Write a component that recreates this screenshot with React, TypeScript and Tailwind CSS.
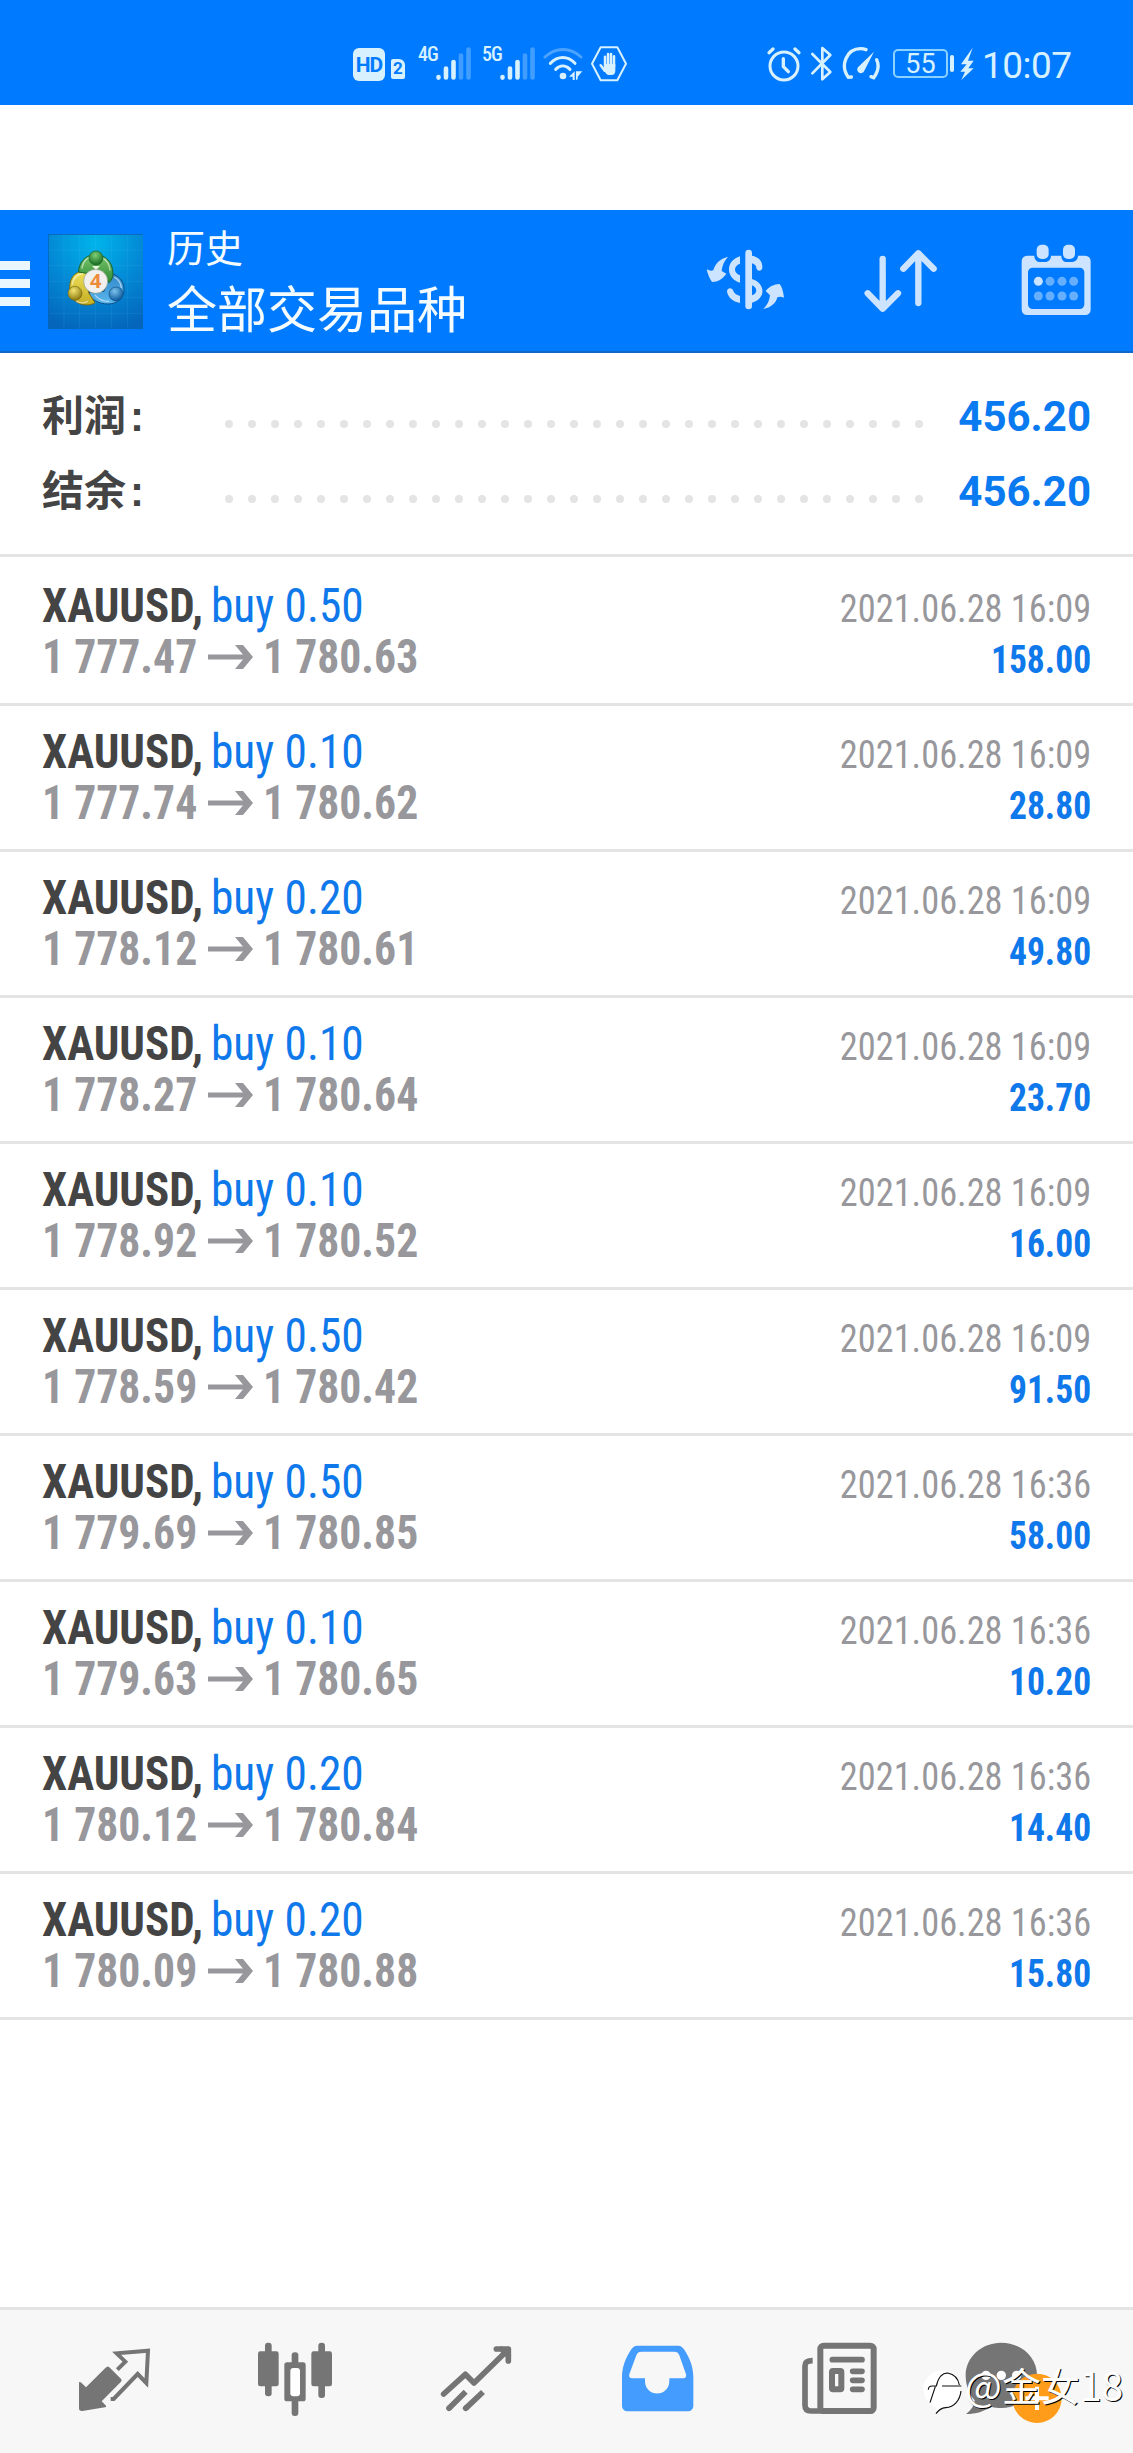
const deals = [
  { volume: '0.50', open: '1 777.47', close: '1 780.63', time: '2021.06.28 16:09', profit: '158.00' },
  { volume: '0.10', open: '1 777.74', close: '1 780.62', time: '2021.06.28 16:09', profit: '28.80' },
  { volume: '0.20', open: '1 778.12', close: '1 780.61', time: '2021.06.28 16:09', profit: '49.80' },
  { volume: '0.10', open: '1 778.27', close: '1 780.64', time: '2021.06.28 16:09', profit: '23.70' },
  { volume: '0.10', open: '1 778.92', close: '1 780.52', time: '2021.06.28 16:09', profit: '16.00' },
  { volume: '0.50', open: '1 778.59', close: '1 780.42', time: '2021.06.28 16:09', profit: '91.50' },
  { volume: '0.50', open: '1 779.69', close: '1 780.85', time: '2021.06.28 16:36', profit: '58.00' },
  { volume: '0.10', open: '1 779.63', close: '1 780.65', time: '2021.06.28 16:36', profit: '10.20' },
  { volume: '0.20', open: '1 780.12', close: '1 780.84', time: '2021.06.28 16:36', profit: '14.40' },
  { volume: '0.20', open: '1 780.09', close: '1 780.88', time: '2021.06.28 16:36', profit: '15.80' },
];

const summary = [
  { label: '利润', value: '456.20' },
  { label: '结余', value: '456.20' },
];

const Signal = ({ label }: { label: string }) => (
  <div className="flex h-9 w-[54px]">
    <span className="w-[18px] whitespace-nowrap text-[20px] leading-[17px] font-medium tracking-[-1px] font-['Roboto_Condensed']">
      {label}
    </span>
    <svg className="h-9 w-9" viewBox="0 0 36 36" stroke="currentColor" strokeWidth="4.6" strokeLinecap="round">
      <path d="M2.5 31v.6M10 22.500v9M17.500 16v15.500" />
      <path d="M25 9.500v22M32.500 3.500v28" opacity=".3" />
    </svg>
  </div>
);

const StatusBar = () => (
  <div className="flex h-[105px] items-start bg-[#007aff] pt-[46px] pl-[353px] text-[#d8f1ff]">
    <div className="mt-[2px] flex h-[33px] w-8 items-center justify-center rounded-[6px] bg-[#d8f1ff] pt-[2px] text-[21px] font-bold tracking-[-1px] text-[#007aff]">
      HD
    </div>
    <div className="mt-[13px] ml-[6px] flex h-5 w-[14px] items-center justify-center rounded-[2px] rounded-tr-[6px] bg-[#d8f1ff] text-[17px] font-bold text-[#007aff]">
      2
    </div>
    <div className="ml-[13px] flex gap-[10px]">
      <Signal label="4G" />
      <Signal label="5G" />
    </div>
    {/* wifi */}
    <svg className="ml-[7px] h-9 w-10" viewBox="0 0 120 108" fill="none" stroke="currentColor" strokeWidth="9" strokeLinecap="round">
      <path d="M6 33c32-30 76-30 108 0" opacity=".35" />
      <path d="M22 52c23-23 52-23 74 0M38 70c13-13 30-13 43 0" />
      <circle cx="60" cy="90" r="10" fill="currentColor" stroke="none" />
      <path d="M95 76v26h-6v-10H78zM99 76v26l5-2v-8l14-16z" fill="currentColor" stroke="none" />
    </svg>
    {/* blocked calls */}
    <svg className="ml-[7px] h-9 w-[38px]" viewBox="0 0 114 108" fill="none" stroke="currentColor" strokeWidth="6" strokeLinejoin="round">
      <path d="M32 4h50l26 49-26 50H32L6 53z" />
      <g strokeLinecap="round" strokeWidth="7.500">
        <path d="M45 64V32M54 60V24M63 60V24M72 62V31" />
        <path d="M44 74L32 58" />
      </g>
      <path d="M42 54h34v20c0 8-5 13-10 13H56c-5 0-8-4-13-13z" fill="currentColor" stroke="none" />
    </svg>

    {/* alarm */}
    <svg className="ml-[137px] h-9 w-[37px]" viewBox="0 0 111 108" fill="none" stroke="currentColor" strokeWidth="9" strokeLinecap="round">
      <circle cx="57" cy="60" r="42" />
      <path d="M55 38v24l15 15" strokeWidth="10" />
      <path d="M12 20L24 9M90 9l12 11" strokeWidth="10" />
    </svg>
    {/* bluetooth */}
    <svg className="ml-[7px] h-9 w-6" viewBox="0 0 72 108" fill="none" stroke="currentColor" strokeWidth="8" strokeLinecap="round" strokeLinejoin="round">
      <path d="M10 24l54 54-24 22V6l24 21L10 82" />
    </svg>
    {/* gauge */}
    <svg className="ml-[7px] h-9 w-[42px]" viewBox="0 0 126 108" fill="none" stroke="currentColor" strokeWidth="10" strokeLinecap="round">
      <path d="M34 93l-9 1C-1 58 20 8 62 8c6 0 11 1 16 3M110 41c8 18 4 37-9 54l-8-3" />
      <path d="M102 17L73 74a11 11 0 1 1-16-13z" fill="currentColor" stroke="none" />
    </svg>
    <div className="mt-[3px] ml-[11px] flex h-[29px] w-[55px] items-center justify-center rounded-[5px] border-2 border-[#8ad2ff] pt-px text-[27px] leading-none">
      55
    </div>
    <div className="mt-[9px] ml-[2px] h-[17px] w-1 rounded-full bg-[#d8f1ff]" />
    <svg className="ml-[6px] h-9 w-[14px]" viewBox="0 0 42 108" fill="currentColor">
      <path d="M38 5L3 55h17L1 77h14L4 102l37-35H25l16-23H24z" />
    </svg>
    <span className="ml-[8px] text-[37px] leading-[39px] tracking-[-0.5px]">10:07</span>
  </div>
);

const Logo = () => (
  <svg className="mt-6 ml-[18px] h-[95px] w-[95px]" viewBox="144 102 285 285">
    <defs>
      <radialGradient id="sky" cx=".5" cy=".1" r=".95">
        <stop offset="0" stopColor="#00b4ea" />
        <stop offset=".5" stopColor="#038ad6" />
        <stop offset="1" stopColor="#0465bb" />
      </radialGradient>
      <linearGradient id="green" x2="0" y2="1">
        <stop offset="0" stopColor="#7cc56b" />
        <stop offset="1" stopColor="#2b8b35" />
      </linearGradient>
      <linearGradient id="yellow" x2="0" y2="1">
        <stop offset="0" stopColor="#efe05a" />
        <stop offset="1" stopColor="#c4ae25" />
      </linearGradient>
      <linearGradient id="blue" x2="0" y2="1">
        <stop offset="0" stopColor="#2f86c8" />
        <stop offset="1" stopColor="#5cb8ee" />
      </linearGradient>
      <radialGradient id="greenBall" cx=".45" cy=".3" r=".7">
        <stop offset="0" stopColor="#7fcf74" />
        <stop offset="1" stopColor="#146b22" />
      </radialGradient>
      <radialGradient id="yellowBall" cx=".4" cy=".3" r=".7">
        <stop offset="0" stopColor="#f3e572" />
        <stop offset="1" stopColor="#8d7a10" />
      </radialGradient>
      <radialGradient id="blueBall" cx=".4" cy=".3" r=".7">
        <stop offset="0" stopColor="#7cc2ec" />
        <stop offset="1" stopColor="#0c5a9c" />
      </radialGradient>
    </defs>
    <path fill="url(#sky)" d="M144 102h285v285H144z" />
    <path d="M192 102v285M239 102v285M287 102v285M335 102v285M383 102v285M144 150h285M144 197h285M144 244h285M144 292h285M144 340h285" stroke="#5fc4f0" strokeOpacity=".2" strokeWidth="2" />
    <path d="M145 387V103h284" fill="none" stroke="#0864b8" strokeWidth="3" />
    <path d="M330 220c26 4 42 24 42 48 0 27-22 44-48 44-29 0-52-15-58-34l46-4z" fill="url(#blue)" stroke="#0d4f87" strokeWidth="3" />
    <path d="M266 213c-34-4-57 14-57 50 0 32 22 52 52 52 10 0 18-3 24-7l-18-28-10-36z" fill="url(#yellow)" stroke="#75680e" strokeWidth="3" />
    <path d="M236 216c0-30 22-52 51-52s52 24 52 56c0 12-5 22-12 28l-14-22-26-18-28 12z" fill="url(#green)" stroke="#1a6427" strokeWidth="3" />
    <path d="M246 204c4-20 14-30 26-34M304 172c14 6 24 20 26 38M217 252c3-18 14-28 30-31M344 232c12 6 18 18 20 30M286 286c10 12 24 18 40 18M230 304c10 6 22 6 32 0" fill="none" stroke="#fff" strokeOpacity=".55" strokeWidth="4" strokeLinecap="round" />
    <circle cx="288" cy="174" r="21" fill="url(#greenBall)" stroke="#1a6427" strokeWidth="2" />
    <circle cx="225" cy="280" r="21" fill="url(#yellowBall)" stroke="#75680e" strokeWidth="2" />
    <circle cx="348" cy="282" r="21" fill="url(#blueBall)" stroke="#0d4f87" strokeWidth="2" />
    <path d="M276 198l12 12 12-12z" fill="#e8f7e0" />
    <circle cx="287" cy="244" r="36" fill="#f1f0ee" stroke="#8f9c8a" strokeWidth="2" />
    <text x="287" y="265" textAnchor="middle" fontSize="60" fontWeight="700" fontFamily="Open Sans, sans-serif" fill="#ee8b3a">4</text>
  </svg>
);

const Header = () => (
  <header className="flex h-[143px] items-start border-b-2 border-[#0f68c9] bg-[#007aff] text-[#f4fcff]">
    <div className="mt-[51px] flex w-[30px] flex-col gap-[9px]">
      <div className="h-[9px] bg-[#eaf7ff]" />
      <div className="h-[9px] bg-[#eaf7ff]" />
      <div className="h-[9px] bg-[#eaf7ff]" />
    </div>
    <Logo />
    <div className="ml-6 w-[538px] pt-[11px] font-['Noto_Sans_CJK_SC',sans-serif]">
      <div className="text-[38px] leading-[50px]">历史</div>
      <div className="mt-[5px] text-[50px] leading-[60px]">全部交易品种</div>
    </div>
    <svg className="mt-[34px] h-[75px] w-20 text-[#cce4ff]" viewBox="75 72 240 225" fill="currentColor">
      <rect x="196" y="89" width="20" height="179" rx="10" />
      <path d="M180 109v22c-20 7-20 27 0 35v22c-44-14-44-66 0-79zM216 107c20 4 32 16 31 36-1 12-17 12-18 0-1-7-5-10-13-13zM216 177c42 13 42 60 0 71v-22c17-5 17-24 0-30zM180 249c-22-5-35-17-39-34 0-12 16-14 19-2 2 7 9 12 20 15z" />
      <path d="M144 110c-12 13-18 29-19 43l14 8c-13 17-24 24-43 25-7-10-13-23-16-38 8 4 13 5 20 3 5-20 20-35 44-41zM250 267c13-13 18-25 20-41l-13-13c12-14 24-20 42-21 7 9 11 24 13 41-7-3-12-4-20-1-4 18-20 31-42 35z" />
    </svg>
    <svg className="mt-[34px] ml-[78px] h-[75px] w-[75px] text-[#cce4ff]" viewBox="549 72 225 225" fill="none" stroke="currentColor" strokeWidth="19" strokeLinecap="round" strokeLinejoin="round">
      <path d="M608 117v148M563 220l45 46 46-46M715 249V100M670 146l45-46 46 46" />
    </svg>
    <svg className="mt-[34px] ml-[82px] h-[75px] w-[72px] text-[#cce4ff]" viewBox="1020 72 216 225" fill="currentColor">
      <path fillRule="evenodd" d="M1041 107h22c0 12 8 19 18 19h14c11 0 18-8 18-19h31c0 12 7 19 17 19h14c11 0 19-8 19-19h22a16 16 0 0 1 16 16v146a16 16 0 0 1-16 16h-175a16 16 0 0 1-16-16V123a16 16 0 0 1 16-16zm17 36a14 14 0 0 0-14 14v96a14 14 0 0 0 14 14h141a14 14 0 0 0 14-14v-96a14 14 0 0 0-14-14z" />
      <rect x="1070" y="74" width="36" height="43" rx="15" />
      <rect x="1149" y="74" width="36" height="43" rx="15" />
      <circle cx="1075" cy="184" r="13.500" />
      <g fill="#66afff">
        <circle cx="1110" cy="184" r="13.500" />
        <circle cx="1146" cy="184" r="13.500" />
        <circle cx="1181" cy="184" r="13.500" />
        <circle cx="1075" cy="228" r="13.500" />
        <circle cx="1110" cy="228" r="13.500" />
        <circle cx="1146" cy="228" r="13.500" />
        <circle cx="1181" cy="228" r="13.500" />
      </g>
    </svg>
  </header>
);

const Summary = () => (
  <section className="h-[204px] border-b-3 border-[#e4e4e4] px-[42px] pt-[26px]">
    {summary.map((item) => (
      <div key={item.label} className="flex h-[75px] items-center font-bold">
        <div className="flex w-[183px] text-[42px] leading-[72px] text-[#444]">
          <span className="-mt-1 font-['Noto_Sans_CJK_SC',sans-serif]">{item.label}</span>
          <span className="ml-1 font-['Liberation_Sans',sans-serif]">:</span>
        </div>
        <div className="mt-[15px] flex w-[698px] justify-between">
          {Array.from({ length: 31 }, (_, i) => (
            <span key={i} className="size-[8px] rounded-full bg-[#e4e4e4]" />
          ))}
        </div>
        <span className="ml-auto text-[42px] leading-[75px] text-[#0a7af0]">{item.value}</span>
      </div>
    ))}
  </section>
);

const DealRow = ({ deal }: { deal: (typeof deals)[number] }) => (
  <li className="flex h-[146px] justify-between border-b-3 border-[#e4e4e4] px-[42px] font-['Roboto_Condensed','Roboto',sans-serif]">
    <div className="pt-5 text-[48px] leading-[51px]">
      <div className="flex whitespace-pre">
        <span className="w-[169px] origin-left scale-x-[0.937] font-bold text-[#444]">XAUUSD,</span>
        <span className="origin-left scale-x-[0.945] text-[#0f78ea]">buy {deal.volume}</span>
      </div>
      <div className="flex items-center font-bold text-[#97979c]">
        <span className="w-[166px] origin-left scale-x-[0.91] whitespace-pre">{deal.open}</span>
        <svg className="h-[26px] w-[45px]" viewBox="0 0 45 26" fill="none" stroke="currentColor" strokeWidth="5">
          <path d="M0 13h42" />
          <path d="M27 1h8l10 12-10 12h-8l10-12z" fill="currentColor" stroke="none" />
        </svg>
        <span className="ml-[10px] origin-left scale-x-[0.91] whitespace-pre">{deal.close}</span>
      </div>
    </div>
    <div className="pt-[23px] text-right text-[39.500px] leading-[51px]">
      <div className="origin-right scale-x-[0.92] text-[#97979c]">{deal.time}</div>
      <div className="origin-right scale-x-[0.9] font-bold text-[#0f78ea]">{deal.profit}</div>
    </div>
  </li>
);

const TabBar = () => (
  <nav className="relative flex h-[146px] items-start border-t-3 border-[#e4e4e4] bg-[#f7f7f7] pt-[30px] pl-[77px] text-[#757575]">
    {/* quotes */}
    <svg className="h-[77px] w-[75px]" viewBox="231 150 225 231" fill="currentColor">
      <path d="M322 230q3-1 6 2l36 36q2 4-1 7l-58 59 13 13q2 5-3 5l-68 11q-10 1-10-8v-78q3-3 7 1l14 14 58-58q3-3 6-4z" />
      <path d="M352 239l24-24-26-25 94-8-5 97-26-27-72 75h-9" fill="none" stroke="currentColor" strokeWidth="12" />
    </svg>
    {/* charts */}
    <svg className="ml-[104px] h-[77px] w-[78px]" viewBox="768 150 234 231" fill="currentColor">
      <rect x="774" y="184" width="62" height="105" rx="7" />
      <rect x="795" y="158" width="20" height="161" rx="9" />
      <rect x="934" y="184" width="62" height="105" rx="7" />
      <rect x="955" y="158" width="20" height="166" rx="9" />
      <rect x="853" y="217" width="64" height="117" rx="8" />
      <rect x="875" y="187" width="20" height="191" rx="9" />
      <rect x="871" y="234" width="29" height="85" rx="9" fill="#fff" />
    </svg>
    {/* trade */}
    <svg className="ml-[105px] h-[77px] w-[75px]" viewBox="117 150 225 231" fill="none" stroke="currentColor" strokeWidth="17" strokeLinecap="round" strokeLinejoin="round">
      <path d="M131 312l65-59 26 26 102-100" />
      <path d="M289 177h36v36M304 177l21 20" />
      <path d="M147 355l50-50M197 355l52-49" strokeLinecap="butt" />
      <path d="M147 355l1-1M197 355l1-1" />
    </svg>
    {/* history, current tab */}
    <svg className="ml-[106px] h-[77px] w-[75px] text-[#449cff]" viewBox="660 150 225 231" fill="currentColor">
      <path fillRule="evenodd" d="M712 167h122c10 0 14 5 19 12 15 24 27 49 27 83v86a16 16 0 0 1-16 16H682a16 16 0 0 1-16-16v-86c0-34 12-59 27-83 5-7 9-12 19-12zm13 18c-9 0-13 3-16 11l-21 57c-2 7 1 12 8 12h39v8c0 50 73 50 73 0v-8h42c7 0 10-5 8-12l-20-57c-3-8-7-11-16-11z" />
    </svg>
    {/* news */}
    <svg className="ml-[106px] h-[77px] w-[77px]" viewBox="93 150 231 231" fill="none" stroke="currentColor" strokeWidth="18" strokeLinecap="round">
      <rect x="151" y="167" width="160" height="196" rx="10" fill="#f7f7f7" />
      <path d="M128 212c-15 0-23 4-23 16v118q0 17 18 17h36" strokeWidth="17" strokeLinecap="butt" />
      <path d="M187 209h89M248 244h28M248 271h28M248 298h28" strokeWidth="17" />
      <rect x="186" y="243" width="28" height="55" rx="3" strokeWidth="18" />
    </svg>
    {/* chat */}
    <svg className="ml-[86px] h-[85px] w-[100px]" viewBox="582 150 300 255" fill="currentColor">
      <path d="M694 158c58 0 107 42 107 98s-49 98-107 98c-11 0-20-1-30-4-22 14-45 22-76 22 16-12 24-24 26-41-16-16-27-44-27-75 0-56 49-98 107-98z" />
      <circle cx="648" cy="256" r="14" fill="#fff" />
      <circle cx="694" cy="256" r="14" fill="#fff" />
      <circle cx="740" cy="256" r="14" fill="#fff" />
      <circle cx="801" cy="325" r="74" fill="#ff9c1a" />
      <path d="M801 290v70M766 325h70" stroke="#fff" strokeWidth="12" />
    </svg>
    <div className="absolute top-[50px] left-[922px] flex items-start text-white">
      <svg className="mt-[9px] h-[46px] w-10" viewBox="456 238 120 138">
        <path d="M515 243a56 56 0 0 1 30 103c-12 8-30 8-46 27l-1-21a56 56 0 0 1 17-109z" fill="#fff" />
        <path d="M475 300q0-11 12-11h12c6-26 18-39 34-39 20 4 32 18 35 36M516 289h58M496 291l-16 48M573 304c-3 28-20 48-46 50-14 1-22 8-29 18" fill="none" stroke="#111" strokeWidth="3.500" />
      </svg>
      <span className="ml-[3px] whitespace-nowrap text-[39px] leading-[48px] [text-shadow:1px_1px_0_#000] font-['Noto_Sans_CJK_SC',sans-serif]">
        @金女18
      </span>
    </div>
  </nav>
);

export default function App() {
  return (
    <div className="flex h-[2453px] w-[1133px] flex-col overflow-hidden bg-white font-[Roboto,sans-serif]">
      <StatusBar />
      <div className="h-[105px]" />
      <Header />
      <Summary />
      <ul className="flex-1 pt-[3px]">
        {deals.map((deal) => (
          <DealRow key={deal.open} deal={deal} />
        ))}
      </ul>
      <TabBar />
    </div>
  );
}
